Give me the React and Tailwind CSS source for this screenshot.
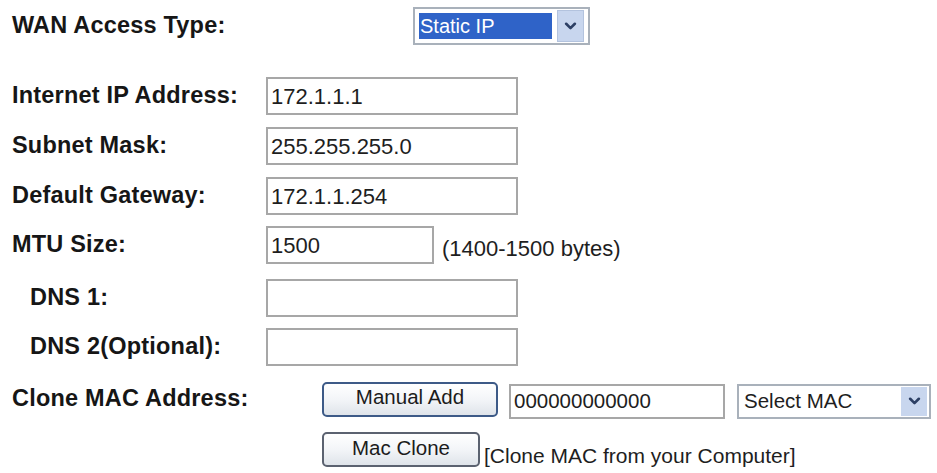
import React from 'react';

function Chevron({ className }) {
  return (
    <svg className={className} viewBox="0 0 12 8" fill="none" stroke="currentColor" strokeWidth="2.4" strokeLinecap="round" strokeLinejoin="round">
      <polyline points="2,1.5 6,5.5 10,1.5" />
    </svg>
  );
}

function Label({ children, indent }) {
  return (
    <div className={`${indent ? 'pl-[18px]' : ''} w-[254px] shrink-0 text-[23.5px] font-bold text-[#161616] tracking-[0.2px]`}>
      {children}
    </div>
  );
}

function TextBox({ value, width = 'w-[252px]' }) {
  return (
    <div className={`${width} h-[38px] border-2 border-[#a7a7a7] bg-white flex items-center pl-[3px] text-[22px] text-[#1e1e1e]`}>
      {value}
    </div>
  );
}

function Btn({ children, width, active }) {
  return (
    <button
      className={`${width} h-[35px] rounded-[5px] border-2 ${active ? 'border-[#3d5a87]' : 'border-[#5b6270]'} bg-gradient-to-b from-white via-[#f3f5f8] to-[#dfe4ea] text-[20.5px] text-[#1c1c1c] flex items-center justify-center pb-[3px]`}
    >
      {children}
    </button>
  );
}

export default function App() {
  return (
    <div className="w-[937px] h-[473px] bg-white overflow-hidden pl-[12px] pt-[7px]" style={{ fontFamily: '"Liberation Sans", Arial, sans-serif' }}>
      {/* WAN type */}
      <div className="flex items-center h-[38px]">
        <div className="w-[401px] shrink-0 text-[23.5px] font-bold text-[#161616] tracking-[0.2px]">WAN Access Type:</div>
        <div className="w-[177px] h-[38px] border-2 border-[#a9b1bb] bg-white flex items-center px-[4px] gap-[5px]">
          <div className="w-[134px] h-[26px] bg-[#2f63c8] text-white text-[20px] flex items-center pl-[1px]">Static IP</div>
          <div className="w-[27px] h-[32px] bg-[#c8d6ee] border border-[#b3c3de] flex items-center justify-center text-[#2c3f64]">
            <Chevron className="w-[13px] h-[9px]" />
          </div>
        </div>
      </div>

      <div className="flex items-center h-[38px] mt-[32px]">
        <Label>Internet IP Address:</Label>
        <TextBox value="172.1.1.1" />
      </div>
      <div className="flex items-center h-[38px] mt-[12px]">
        <Label>Subnet Mask:</Label>
        <TextBox value="255.255.255.0" />
      </div>
      <div className="flex items-center h-[38px] mt-[12px]">
        <Label>Default Gateway:</Label>
        <TextBox value="172.1.1.254" />
      </div>
      <div className="flex items-center h-[38px] mt-[11px]">
        <Label>MTU Size:</Label>
        <TextBox value="1500" width="w-[168px]" />
        <span className="ml-[8px] text-[22px] text-[#1e1e1e] pt-[6px]">(1400-1500 bytes)</span>
      </div>
      <div className="flex items-center h-[37px] mt-[15px]">
        <Label indent>DNS 1:</Label>
        <TextBox value="" />
      </div>
      <div className="flex items-center h-[38px] mt-[12px]">
        <Label indent>DNS 2(Optional):</Label>
        <TextBox value="" />
      </div>

      {/* Clone MAC */}
      <div className="flex items-center h-[38px] mt-[14px]">
        <div className="w-[310px] shrink-0 text-[23.5px] font-bold text-[#161616] tracking-[0.2px]">Clone MAC Address:</div>
        <Btn width="w-[176px]" active>Manual Add</Btn>
        <div className="ml-[11px] w-[216px] h-[35px] mt-[4px] border-2 border-[#a7a7a7] bg-white flex items-center pl-[3px] text-[20.5px] text-[#1e1e1e]">
          000000000000
        </div>
        <div className="ml-[12px] w-[194px] h-[35px] mt-[4px] border-2 border-[#a9b1bb] bg-white flex items-center justify-between pl-[5px] pr-[2px] text-[20.5px] text-[#1e1e1e]">
          <span>Select MAC</span>
          <div className="w-[26px] h-[29px] bg-[#c8d6ee] flex items-center justify-center text-[#2c3f64]">
            <Chevron className="w-[13px] h-[9px]" />
          </div>
        </div>
      </div>

      <div className="flex items-end h-[36px] mt-[13px] pl-[310px]">
        <Btn width="w-[158px]">Mac Clone</Btn>
        <span className="ml-[4px] text-[21px] text-[#1e1e1e] leading-none pb-[1px]">[Clone MAC from your Computer]</span>
      </div>
    </div>
  );
}
